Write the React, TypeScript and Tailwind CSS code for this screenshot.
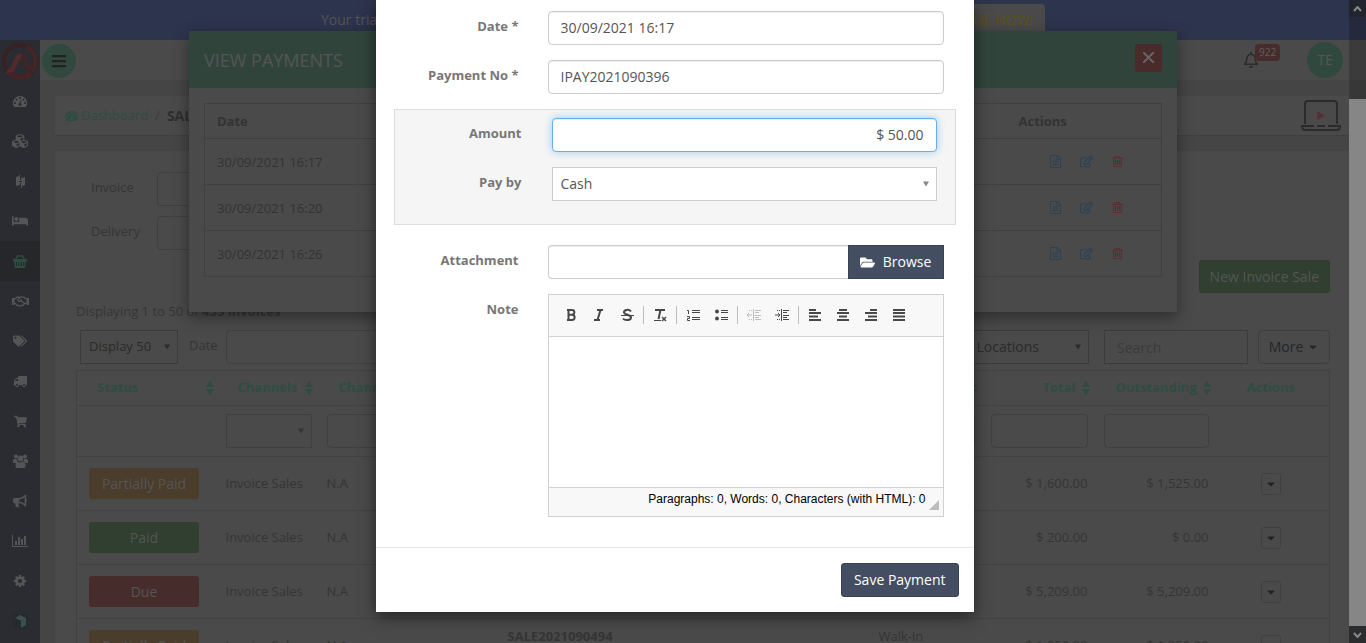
import type { ReactNode } from 'react';
import {
  FaBars,
  FaBed,
  FaBullhorn,
  FaCaretDown,
  FaCubes,
  FaFolderOpen,
  FaRegBell,
  FaRegEdit,
  FaRegHandshake,
  FaShoppingCart,
  FaTags,
} from 'react-icons/fa';

const paths = {
  gauge:
    'M384 1152q0-53-37.500-90.500t-90.500-37.500-90.500 37.500-37.500 90.500 37.500 90.500 90.500 37.500 90.500-37.500 37.500-90.500zm192-448q0-53-37.500-90.500t-90.500-37.500-90.500 37.500-37.500 90.500 37.500 90.500 90.500 37.500 90.500-37.500 37.500-90.500zm428 481l101-382q6-26-7.500-48.500t-38.500-29.500-48 6.500-30 39.500l-101 382q-60 5-107 43.500t-63 98.500q-20 77 20 146t117 89 146-20 89-117q16-60-6-117t-72-91zm660-33q0-53-37.500-90.500t-90.500-37.500-90.500 37.500-37.500 90.500 37.500 90.500 90.500 37.500 90.500-37.500 37.500-90.500zm-640-640q0-53-37.500-90.500t-90.500-37.500-90.500 37.500-37.500 90.500 37.500 90.500 90.500 37.500 90.500-37.500 37.500-90.500zm448 192q0-53-37.500-90.500t-90.500-37.500-90.500 37.500-37.500 90.500 37.500 90.500 90.500 37.500 90.500-37.500 37.500-90.500zm320 448q0 261-141 483-19 29-54 29h-1402q-35 0-54-29-141-221-141-483 0-182 71-348t191-286 286-191 348-71 348 71 286 191 191 286 71 348z',
  truck:
    'M640 1408q0-52-38-90t-90-38-90 38-38 90 38 90 90 38 90-38 38-90zm-384-512h384v-256h-158q-13 0-22 9l-195 195q-9 9-9 22v30zm1280 512q0-52-38-90t-90-38-90 38-38 90 38 90 90 38 90-38 38-90zm256-1088v1024q0 15-4 26.500t-13.500 18.500-16.500 11.500-23.500 6-22.500 2-25.500 0-22.500-.5q0 106-75 181t-181 75-181-75-75-181h-384q0 106-75 181t-181 75-181-75-75-181h-64q-3 0-22.500.5t-25.500 0-22.500-2-23.500-6-16.500-11.500-13.500-18.500-4-26.500q0-26 19-45t45-19v-320q0-8-.5-35t0-38 2.500-34.500 6.500-37 14-30.500 22.500-30l198-198q19-19 50.500-32t58.500-13h160v-192q0-26 19-45t45-19h1024q26 0 45 19t19 45z',
  cog: 'M1152 896q0-106-75-181t-181-75-181 75-75 181 75 181 181 75 181-75 75-181zm512-109v222q0 12-8 23t-20 13l-185 28q-19 54-39 91 35 50 107 138 10 12 10 25t-9 23q-27 37-99 108t-94 71q-12 0-26-9l-138-108q-44 23-91 38-16 136-29 186-7 28-36 28h-222q-14 0-24.500-8.500t-11.500-21.500l-28-184q-49-16-90-37l-141 107q-10 9-25 9-14 0-25-11-126-114-165-168-7-10-7-23 0-12 8-23 15-21 51-66.500t54-70.500q-27-50-41-99l-183-27q-13-2-21-12.500t-8-23.500v-222q0-12 8-23t19-13l186-28q14-46 39-92-40-57-107-138-10-12-10-24 0-10 9-23 26-36 98.500-107.500t94.500-71.500q13 0 26 10l138 107q44-23 91-38 16-136 29-186 7-28 36-28h222q14 0 24.500 8.500t11.500 21.500l28 184q49 16 90 37l142-107q9-9 24-9 13 0 25 10 129 119 165 170 7 8 7 22 0 12-8 23-15 21-51 66.500t-54 70.500q26 50 41 98l183 28q13 2 21 12.500t8 23.500z',
  file: 'M1596 380q28 28 48 76t20 88v1152q0 40-28 68t-68 28h-1344q-40 0-68-28t-28-68v-1600q0-40 28-68t68-28h896q40 0 88 20t76 48zm-444-244v376h376q-10-29-22-41l-313-313q-12-12-41-22zm384 1528v-1024h-416q-40 0-68-28t-28-68v-416h-768v1536h1280zm-1024-864q0-14 9-23t23-9h704q14 0 23 9t9 23v64q0 14-9 23t-23 9h-704q-14 0-23-9t-9-23v-64zm736 224q14 0 23 9t9 23v64q0 14-9 23t-23 9h-704q-14 0-23-9t-9-23v-64q0-14 9-23t23-9h704zm0 256q14 0 23 9t9 23v64q0 14-9 23t-23 9h-704q-14 0-23-9t-9-23v-64q0-14 9-23t23-9h704z',
  trash:
    'M704 736v576q0 14-9 23t-23 9h-64q-14 0-23-9t-9-23v-576q0-14 9-23t23-9h64q14 0 23 9t9 23zm256 0v576q0 14-9 23t-23 9h-64q-14 0-23-9t-9-23v-576q0-14 9-23t23-9h64q14 0 23 9t9 23zm256 0v576q0 14-9 23t-23 9h-64q-14 0-23-9t-9-23v-576q0-14 9-23t23-9h64q14 0 23 9t9 23zm128 724v-948h-896v948q0 22 7 40.500t14.500 27 10.500 8.500h832q3 0 10.500-8.500t14.500-27 7-40.500zm-672-1076h448l-48-117q-7-9-17-11h-317q-10 2-17 11zm928 32v64q0 14-9 23t-23 9h-96v948q0 83-47 143.500t-113 60.500h-832q-66 0-113-58.500t-47-141.500v-952h-96q-14 0-23-9t-9-23v-64q0-14 9-23t23-9h309l70-167q15-37 54-63t79-26h320q40 0 79 26t54 63l70 167h309q14 0 23 9t9 23z',
};

function Glyph({ name, size = 14 }: { name: keyof typeof paths; size?: number }) {
  return (
    <svg viewBox="0 0 1792 1792" width={size} height={size} fill="currentColor" aria-hidden="true">
      <path d={paths[name]} />
    </svg>
  );
}

function Logo() {
  return (
    <svg viewBox="0 0 38 38" width="38" height="38" fill="none" aria-hidden="true">
      <circle cx="19" cy="19" r="16" stroke="#372122" strokeWidth="4" />
      <path d="M26 5a16 16 0 0 1 5 24" stroke="#452526" strokeWidth="4" />
      <path d="M19 13c4 0 6 9 10 16" stroke="#402526" strokeWidth="5" />
      <path d="M6 29c8 4 7-15 14-15" stroke="#502a2c" strokeWidth="5" />
      <path d="M8 31a16 16 0 0 0 22 0" stroke="#4a2225" strokeWidth="4" />
    </svg>
  );
}

function BarChart() {
  return (
    <svg viewBox="0 0 2048 1792" width="16" height="14" fill="currentColor" aria-hidden="true">
      <path d="M640 896v512h-256v-512h256zm384-512v1024h-256v-1024h256zm1024 1152v128h-2048v-1536h128v1408h1920zm-640-896v768h-256v-768h256zm384-384v1152h-256v-1152h256z" />
    </svg>
  );
}

function Basket() {
  return (
    <svg viewBox="0 0 14 13" width="14" height="13" fill="currentColor" aria-hidden="true">
      <path d="M3 4l1.500-3h5L11 4" fill="none" stroke="currentColor" strokeWidth="1.500" />
      <path fillRule="evenodd" d="M0 4h14v2h-1l-1 7H2L1 6H0zM3 7v4h1V7zM5.500 7v4h1V7zM8 7v4h1V7zM10.300 7v4h1V7z" />
    </svg>
  );
}

function People() {
  return (
    <svg viewBox="0 0 15 14" width="15" height="14" fill="currentColor" aria-hidden="true">
      <circle cx="3" cy="2.500" r="2" />
      <circle cx="12" cy="2.500" r="2" />
      <circle cx="7.500" cy="4.500" r="2.900" />
      <path d="M0 9V6.500Q0 5 1.200 5h2.600q.2 2 1 2.800L3.500 9zM15 9V6.500Q15 5 13.800 5h-2.600q-.2 2-1 2.800L11.500 9zM2.500 12q0-4.200 2.500-4.200 2.500 1.400 5 0 2.500 0 2.500 4.200 0 2-1.500 2H4q-1.500 0-1.500-2z" />
    </svg>
  );
}

const menu: { label: string; icon: ReactNode; active?: boolean }[] = [
  { label: 'Dashboard', icon: <Glyph name="gauge" /> },
  { label: 'Products', icon: <FaCubes size={16} /> },
  {
    label: 'Quick links',
    icon: (
      <svg viewBox="0 0 9 13" width="9" height="13" fill="currentColor" aria-hidden="true">
        <path d="M0 2l3-1V0h1v5h1V3l4-1v8l-3 1v2H5V8H4v2l-4 1zM3 6h3v1H3z" fillRule="evenodd" />
      </svg>
    ),
  },
  { label: 'Rooms', icon: <FaBed size={16} /> },
  { label: 'Sales', icon: <Basket />, active: true },
  { label: 'Partners', icon: <FaRegHandshake size={17} /> },
  { label: 'Promotions', icon: <FaTags size={14} /> },
  { label: 'Delivery', icon: <Glyph name="truck" /> },
  { label: 'Purchases', icon: <FaShoppingCart size={13} /> },
  { label: 'Customers', icon: <People /> },
  { label: 'Marketing', icon: <FaBullhorn size={14} /> },
  { label: 'Reports', icon: <BarChart /> },
  { label: 'Settings', icon: <Glyph name="cog" /> },
  {
    label: 'Apps',
    icon: (
      <svg viewBox="0 0 15 15" width="15" height="15" aria-hidden="true">
        <rect width="15" height="15" fill="#232b2d" />
        <path d="M2 4l5-3 6 3v7l-5 3V7z" fill="#3c4f50" />
      </svg>
    ),
  },
];

function SortIcon() {
  return (
    <svg viewBox="0 0 8 14" width="8" height="14" fill="currentColor" className="shrink-0" aria-hidden="true">
      <path d="M4 0l4 6H0zM4 14l4-6H0z" />
    </svg>
  );
}

function Select({
  id,
  label,
  value,
  className,
  arrow,
}: {
  id: string;
  label?: string;
  value: string;
  className: string;
  arrow: string;
}) {
  return (
    <div className="relative">
      <select id={id} aria-label={label} className={'h-[34px] w-full appearance-none border pl-2 pr-6 outline-none ' + className}>
        <option>{value}</option>
      </select>
      <span className={'pointer-events-none absolute inset-y-0 right-2 flex items-center ' + arrow}>
        <svg viewBox="0 0 7 6" width="6" height="6" fill="currentColor" aria-hidden="true">
          <path d="M0 0h7L3.500 6z" />
        </svg>
      </span>
    </div>
  );
}

const dimField = 'h-[34px] w-full rounded border border-[#404040] bg-transparent';

const rows = [
  { status: 'Partially Paid', tone: 'bg-[#4a3d2b]', no: 'SALE2021090497', total: '$ 1,600.00', due: '$ 1,525.00' },
  { status: 'Paid', tone: 'bg-[#303f2f]', no: 'SALE2021090496', total: '$ 200.00', due: '$ 0.00' },
  { status: 'Due', tone: 'bg-[#472c2c]', no: 'SALE2021090495', total: '$ 5,209.00', due: '$ 5,209.00' },
  { status: 'Partially Paid', tone: 'bg-[#4a3d2b]', no: 'SALE2021090494', customer: 'Walk-in', total: '$ 1,350.00', due: '$ 1,350.00' },
];

function InvoiceTable() {
  const th = 'h-[35px] p-0 font-bold';
  return (
    <table className="w-full table-fixed border-collapse border border-[#424242] text-[13px] text-[#353535]">
      <colgroup>
        <col className="w-[137px]" />
        <col className="w-[101px]" />
        <col className="w-[181px]" />
        <col className="w-[371px]" />
        <col />
        <col className="w-[113px]" />
        <col className="w-[121px]" />
        <col className="w-[117px]" />
      </colgroup>
      <thead className="text-[#2d4d41]">
        <tr className="border-b border-[#424242]">
          <th className={th}>
            <button className="flex w-full items-center justify-between pl-5">
              Status <SortIcon />
            </button>
          </th>
          <th className={th}>
            <button className="flex w-full items-center justify-between pl-6 pr-0.5">
              Channels <SortIcon />
            </button>
          </th>
          <th className={th + ' text-left'}>
            <span className="pl-6">Channel No</span>
          </th>
          <th className={th + ' text-left'}>
            <span className="pl-3">Invoice No</span>
          </th>
          <th className={th}>
            <button className="flex w-full items-center justify-between pl-3 pr-0.5">
              Customer <SortIcon />
            </button>
          </th>
          <th className={th}>
            <button className="flex w-full items-center justify-end gap-1.5 pr-0.5">
              Total <SortIcon />
            </button>
          </th>
          <th className={th}>
            <button className="flex w-full items-center justify-end gap-1.5 pr-0.5">
              Outstanding <SortIcon />
            </button>
          </th>
          <th className={th}>Actions</th>
        </tr>
        <tr className="border-b border-[#424242]">
          <td className="h-[51px]" />
          <td className="pl-3 pr-[3px]">
            <Select id="f-channel" label="Filter channels" value="" className="border-[#404040] bg-transparent" arrow="text-[#353535]" />
          </td>
          <td className="pl-3 pr-1">
            <input aria-label="Filter channel number" className={dimField} />
          </td>
          <td className="pl-3 pr-1">
            <input aria-label="Filter invoice number" className={dimField} />
          </td>
          <td className="pl-3 pr-1">
            <input aria-label="Filter customer" className={dimField} />
          </td>
          <td className="pl-3 pr-1">
            <input aria-label="Filter total" className={dimField} />
          </td>
          <td className="pl-3 pr-1">
            <input aria-label="Filter outstanding" className={dimField} />
          </td>
          <td />
        </tr>
      </thead>
      <tbody>
        {rows.map((r) => (
          <tr key={r.no} className="border-b border-[#424242]">
            <td className="h-[54px] pl-3">
              <span className={'flex h-[31px] w-[110px] items-center justify-center rounded-[3px] text-sm text-[#555] ' + r.tone}>
                {r.status}
              </span>
            </td>
            <td className="pl-3">Invoice Sales</td>
            <td className="pl-3">N.A</td>
            <td className="pl-3 pt-2 align-top font-bold">{r.no}</td>
            <td className="pl-3 pt-2 align-top">{r.customer}</td>
            <td className="pl-3 pr-1 text-right">{r.total}</td>
            <td className="pl-3 pr-1 text-right">{r.due}</td>
            <td className="text-center">
              <button aria-label="Row actions" className="inline-flex h-[22px] w-5 items-center justify-center rounded-[3px] border border-[#404040] align-middle text-[#222]">
                <FaCaretDown size={12} />
              </button>
            </td>
          </tr>
        ))}
      </tbody>
    </table>
  );
}

function Page() {
  return (
    <div className="flex h-full flex-col">
      <div className="h-10 shrink-0 bg-[#2d344d] text-sm text-[#555]">
        <div className="mx-auto flex max-w-[724px] items-start justify-between pt-1">
          <span className="pt-1.5">Your trial ends</span>
          <a href="#upgrade" className="rounded bg-[#4a4a4a] px-3 py-1.5 text-[#5c5016]">
            UPGRADE NOW!
          </a>
        </div>
      </div>
      <div className="flex min-h-0 flex-1">
        <nav className="flex w-10 shrink-0 flex-col overflow-hidden bg-[#2b2c31] text-[#555]">
          <a href="#home" aria-label="Home" className="flex h-[41px] shrink-0 items-center justify-center">
            <Logo />
          </a>
          {menu.map((m) => (
            <a
              key={m.label}
              href="#menu"
              aria-label={m.label}
              className={'flex h-10 shrink-0 items-center justify-center ' + (m.active ? 'bg-[#26272a] text-[#2d4d41]' : '')}
            >
              {m.icon}
            </a>
          ))}
        </nav>
        <div className="flex min-w-0 flex-1 flex-col">
          <header className="flex h-10 shrink-0 items-center bg-[#4a4a4a] pl-0.5 pr-[23px]">
            <button aria-label="Toggle menu" className="mt-0.5 flex size-[34px] items-center justify-center rounded-full bg-[#31483f] text-[#222]">
              <FaBars size={16} />
            </button>
            <div className="relative ml-auto mr-12 text-[#2b2b2b]">
              <FaRegBell size={16} />
              <span className="absolute -top-2 left-3 rounded-sm bg-[#472c2c] px-1 text-[10px] leading-[17px] text-[#606060]">922</span>
            </div>
            <span className="flex size-9 items-center justify-center rounded-full bg-[#31483f] text-sm text-[#555]">TE</span>
          </header>
          <main className="flex min-h-0 flex-1 flex-col gap-[15px] overflow-hidden bg-[#454545] pl-[15px] pr-4 pt-4">
            <div className="flex h-10 shrink-0 items-center border-b border-[#3f3f3f] bg-[#4a4a4a] pl-2.5 pr-[9px] text-sm">
              <span className="mr-[3px] text-[#2d4d41]">
                <Glyph name="gauge" size={13} />
              </span>
              <a href="#dashboard" className="text-[13px] text-[#2d4d41]">
                Dashboard
              </a>
              <span className="mx-[7px] text-[13px] text-[#3c3c3c]">/</span>
              <b className="text-[#2e2e2e]">SALES</b>
              <svg viewBox="0 0 40 32" width="40" height="32" fill="none" stroke="#2b2b2b" strokeWidth="2" className="ml-auto" aria-hidden="true">
                <path d="M4 24V4q0-3 3-3h26q3 0 3 3v20" />
                <path d="M13 26H1q0 4 3 4h32q3 0 3-4H27M16 26h8" />
                <path d="M16 11l8 4.500-8 4.500z" fill="#552f34" stroke="none" />
              </svg>
            </div>
            <section className="flex-1 overflow-hidden bg-[#4a4a4a] pl-[21px] pr-5 pt-[21px] text-[13px] text-[#353535]">
              <div className="grid grid-cols-[66px_220px] gap-y-2.5 pl-[15px]">
                <label htmlFor="invoice" className="pt-1.5">Invoice</label>
                <input id="invoice" className={dimField} />
                <label htmlFor="delivery" className="pt-1.5">Delivery</label>
                <input id="delivery" className={dimField} />
              </div>
              <div className="mt-2.5 flex justify-end">
                <button className="h-[33px] rounded-[3px] border border-[#2b3f2b] bg-[#303f2f] px-2.5 text-sm text-[#555]">
                  New Invoice Sale
                </button>
              </div>
              <p className="mt-2 leading-5">
                Displaying 1 to 50 of <b>453 invoices</b>
              </p>
              <div className="mt-[9px] flex items-start pl-1">
                <div className="w-[98px]">
                  <Select id="page-size" label="Page size" value="Display 50" className="border-[#3c3c3c] bg-transparent text-[#2b2b2b]" arrow="text-[#2b2b2b]" />
                </div>
                <label htmlFor="date-range" className="ml-[11px] mr-2 pt-1.5">Date</label>
                <div className="w-[240px]">
                  <input id="date-range" className={dimField} />
                </div>
                <div className="ml-auto w-[141px]">
                  <Select id="location" label="Location" value="All Locations" className="border-[#3c3c3c] bg-transparent text-sm text-[#2b2b2b]" arrow="text-[#2b2b2b]" />
                </div>
                <input
                  aria-label="Search"
                  placeholder="Search"
                  className="ml-[15px] h-[34px] w-36 border border-[#3c3c3c] bg-transparent px-3 text-sm placeholder:text-[#3a3a3a]"
                />
                <button className="ml-2.5 flex h-[34px] w-[72px] items-center justify-center gap-1 rounded border border-[#3e3e3e] text-sm text-[#262626]">
                  More <FaCaretDown size={12} />
                </button>
              </div>
              <div className="mt-1.5">
                <InvoiceTable />
              </div>
            </section>
          </main>
        </div>
      </div>
    </div>
  );
}

function PaymentsDialog() {
  return (
    <div role="dialog" aria-label="View payments" className="w-[988px] bg-[#4a4a4a] pb-[35px] shadow-[0_5px_15px_rgba(0,0,0,0.4)]">
      <header className="flex h-[57px] items-center justify-between bg-[#31443c] px-[15px] text-lg text-[#555]">
        <h2>VIEW PAYMENTS</h2>
        <button aria-label="Close payments" className="mb-1 flex h-7 w-[27px] items-center justify-center rounded-[3px] bg-[#4a2b2b]">
          <svg viewBox="0 0 11 11" width="11" height="11" stroke="#666" strokeWidth="2" aria-hidden="true">
            <path d="M0 0l11 11M11 0L0 11" />
          </svg>
        </button>
      </header>
      <div className="px-[15px] pt-[15px]">
        <table className="w-full border-collapse border border-[#404040] text-[13px] text-[#333]">
          <thead>
            <tr className="h-[35px] border-b border-[#404040]">
              <th className="pl-3 pt-0.5 text-left">Date</th>
              <th className="w-[143px] pt-0.5 text-left">Actions</th>
            </tr>
          </thead>
          <tbody>
            {['30/09/2021 16:17', '30/09/2021 16:20', '30/09/2021 16:26'].map((d) => (
              <tr key={d} className="h-[46px] border-b border-[#404040]">
                <td className="pl-3 pt-0.5">{d}</td>
                <td>
                  <div className="flex items-center gap-[17px] pl-[30px]">
                    <button aria-label="View payment" className="flex w-3.5 justify-center text-[#2b4255]">
                      <Glyph name="file" size={13} />
                    </button>
                    <button aria-label="Edit payment" className="flex w-3.5 justify-center text-[#2b4255]">
                      <FaRegEdit size={13} />
                    </button>
                    <button aria-label="Delete payment" className="flex w-3.5 justify-center text-[#5c2a2c]">
                      <Glyph name="trash" size={13} />
                    </button>
                  </div>
                </td>
              </tr>
            ))}
          </tbody>
        </table>
      </div>
    </div>
  );
}

function Tool({ label, children, off }: { label: string; children: ReactNode; off?: boolean }) {
  return (
    <button type="button" aria-label={label} disabled={off} className={'flex h-[18px] w-7 items-center justify-center ' + (off ? 'text-[#bdbdbd]' : 'text-[#484848]')}>
      <svg viewBox="0 0 16 16" width="16" height="16" fill="none" stroke="currentColor" aria-hidden="true">
        {children}
      </svg>
    </button>
  );
}

function Divider() {
  return <span className="mx-[2px] h-[18px] w-px bg-[#bcbcbc]" />;
}

function Editor() {
  return (
    <div className="border border-[#d1d1d1]">
      <div className="flex h-[42px] items-center border-b border-[#d1d1d1] bg-[#f8f8f8] pb-0.5 pl-2">
        <Tool label="Bold">
          <path d="M5.500 3v10M4 3h5a2.300 2.300 0 0 1 0 4.700H5M9 7.700a2.500 2.500 0 0 1 0 5.300H4" strokeWidth="2" />
        </Tool>
        <Tool label="Italic">
          <path d="M6 3h6M3 13h6M9.500 3l-3 10" strokeWidth="2" />
        </Tool>
        <Tool label="Strikethrough">
          <path d="M12 4.500C10 2 5 2.500 5 5.300S12 7.500 12 10.500 6 14 4 11.500" strokeWidth="2" />
          <path d="M2 8.500h13" />
        </Tool>
        <Divider />
        <Tool label="Remove format">
          <path d="M3 3h10M8.500 3l-2 9" strokeWidth="2" />
          <path d="M2 13.500h7" />
          <path d="M10 10l4 4M14 10l-4 4" strokeWidth="1.500" />
        </Tool>
        <Divider />
        <Tool label="Numbered list">
          <path d="M2 3.500h1.500V7M2 9.500h2.500v2H2.500v2H5M7 3.500h8M7 5.500h8M7 10.500h8M7 12.500h8" />
        </Tool>
        <Tool label="Bulleted list">
          <circle cx="4" cy="4.500" r="2" fill="currentColor" stroke="none" />
          <circle cx="4" cy="11.500" r="2" fill="currentColor" stroke="none" />
          <path d="M8 3.500h7M8 5.500h7M8 10.500h7M8 12.500h7" />
        </Tool>
        <Divider />
        <Tool label="Decrease indent" off>
          <path d="M7.500 2v12M9 3.500h6M9 5.500h4M9 8.500h6M9 10.500h4M9 12.500h6M1 8h5M3 6L1 8l2 2M3 3.500h1M5 3.500h1M3 12.500h1M5 12.500h1" />
        </Tool>
        <Tool label="Increase indent">
          <path d="M7.500 2v12M9 3.500h6M9 5.500h4M9 8.500h6M9 10.500h4M9 12.500h6M1 8h5M4 6l2 2-2 2M3 3.500h1M5 3.500h1M3 12.500h1M5 12.500h1" />
        </Tool>
        <Divider />
        <Tool label="Align left">
          <path d="M2 3h7M2 6h12M2 9.500h9M2 13h12" strokeWidth="2" />
        </Tool>
        <Tool label="Align center">
          <path d="M4 3h8M2 6h12M4 9.500h8M2 13h12" strokeWidth="2" />
        </Tool>
        <Tool label="Align right">
          <path d="M7 3h7M2 6h12M5 9.500h9M2 13h12" strokeWidth="2" />
        </Tool>
        <Tool label="Justify">
          <path d="M2 3h12M2 6h12M2 9.500h12M2 13h12" strokeWidth="2" />
        </Tool>
      </div>
      <textarea id="note" className="block h-[150px] w-full resize-none bg-white p-5 outline-none" />
      <div className="flex h-[29px] items-start justify-end border-t border-[#d1d1d1] bg-[#f8f8f8] pr-1 pt-0.5 font-['Liberation_Sans',Arial,sans-serif] text-xs leading-[18px] text-black">
        <span className="mr-[3px]">Paragraphs: 0, Words: 0, Characters (with HTML): 0</span>
        <svg viewBox="0 0 10 10" width="10" height="10" className="mt-2.5" aria-hidden="true">
          <path d="M10 0v10H0z" fill="#bcbcbc" />
        </svg>
      </div>
    </div>
  );
}

const field = 'h-[34px] w-full rounded border px-3 pb-0.5 text-sm text-[#555] outline-none';
const labelStyle = 'pt-[5px] text-right text-[13px] font-bold leading-5 text-[#777]';

function PaymentForm() {
  const grid = 'grid grid-cols-[125px_minmax(0,1fr)] gap-x-[29px] gap-y-[15px] pr-3';
  return (
    <form role="dialog" aria-label="Payment" className="w-[598px] bg-white shadow-[0_5px_15px_rgba(0,0,0,0.5)]">
      <div className="px-[18px] pb-[30px] pt-[11px]">
        <div className={grid}>
          <label htmlFor="date" className={labelStyle}>Date *</label>
          <input id="date" defaultValue="30/09/2021 16:17" className={field + ' border-[#ccc] shadow-[inset_0_1px_1px_rgba(0,0,0,0.075)]'} />
          <label htmlFor="payment-no" className={labelStyle}>Payment No *</label>
          <input id="payment-no" defaultValue="IPAY2021090396" className={field + ' border-[#ccc] shadow-[inset_0_1px_1px_rgba(0,0,0,0.075)]'} />
        </div>
        <div className="my-[15px] grid grid-cols-[127px_minmax(0,1fr)] gap-x-[30px] gap-y-[15px] border border-[#ddd] bg-[#f5f5f5] pb-[23px] pr-[18px] pt-2">
          <label htmlFor="amount" className={labelStyle}>Amount</label>
          <input
            id="amount"
            defaultValue="$ 50.00"
            className={field + ' border-[#66afe9] bg-white text-right shadow-[inset_0_1px_1px_rgba(0,0,0,0.075),0_0_8px_rgba(102,175,233,0.6)]'}
          />
          <label htmlFor="pay-by" className={labelStyle}>Pay by</label>
          <Select id="pay-by" value="Cash" className="border-[#ccc] bg-white text-sm text-[#555]" arrow="text-[#888]" />
        </div>
        <div className={grid + ' mt-5'}>
          <label htmlFor="attachment" className={labelStyle}>Attachment</label>
          <div className="flex">
            <input id="attachment" className="h-[34px] min-w-0 flex-1 rounded-l border border-r-0 border-[#ccc] px-3 text-sm shadow-[inset_0_1px_1px_rgba(0,0,0,0.075)] outline-none" />
            <button type="button" className="flex h-[34px] w-24 items-center justify-center gap-2 border border-[#374253] bg-[#434e62] text-sm text-white">
              <FaFolderOpen size={15} />
              Browse
            </button>
          </div>
          <label htmlFor="note" className={labelStyle}>Note</label>
          <Editor />
        </div>
      </div>
      <footer className="flex justify-end border-t border-[#e5e5e5] p-[15px]">
        <button type="button" className="h-[34px] rounded-[3px] border border-[#374253] bg-[#434e62] px-3 text-sm text-white">
          Save Payment
        </button>
      </footer>
    </form>
  );
}

function ScrollRail() {
  return (
    <div className="absolute inset-y-0 right-0 flex w-[17px] flex-col" aria-hidden="true">
      <div className="flex h-[17px] items-center justify-center bg-[#22252f]">
        <svg viewBox="0 0 9 6" width="9" height="6" fill="none" stroke="#888" strokeWidth="2">
          <path d="M1 5l3.500-4L8 5" />
        </svg>
      </div>
      <div className="h-[82px] bg-black/20" />
      <div className="flex-1 bg-[#868686]" />
      <div className="flex h-[17px] items-center justify-center bg-[#2b2c2e]">
        <svg viewBox="0 0 9 6" width="9" height="6" fill="none" stroke="#888" strokeWidth="2">
          <path d="M1 1l3.500 4L8 1" />
        </svg>
      </div>
    </div>
  );
}

export default function App() {
  return (
    <div className="relative h-screen overflow-hidden bg-[#4a4a4a] font-['Open_Sans',sans-serif]">
      <Page />
      <div className="absolute inset-x-0 top-[31px] flex justify-center">
        <PaymentsDialog />
      </div>
      <div className="absolute inset-y-0 left-0 right-[17px] flex items-start justify-center">
        <PaymentForm />
      </div>
      <ScrollRail />
    </div>
  );
}
